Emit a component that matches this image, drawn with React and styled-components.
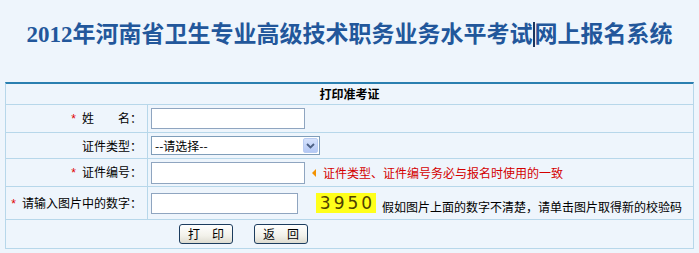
import React from 'react';
import styled, { createGlobalStyle } from 'styled-components';

const GlobalStyle = createGlobalStyle`
  html, body { margin: 0; padding: 0; background: #EEF5FC; }
  body {
    font-family: "Noto Sans CJK SC", "Liberation Sans", sans-serif;
    font-size: 12px;
    color: #000;
  }
`;

const Page = styled.div`
  width: 699px;
  height: 253px;
  overflow: hidden;
`;

const Title = styled.h1`
  margin: 0;
  height: 82px;
  box-sizing: border-box;
  padding-top: 21px;
  text-align: center;
  font-family: "Liberation Serif", "Noto Sans CJK SC", serif;
  font-size: 23px;
  font-weight: bold;
  line-height: 28px;
  color: #22579B;
  white-space: nowrap;
`;

const Caret = styled.span`
  display: inline-block;
  width: 2px;
  height: 25px;
  background: #1a3560;
  vertical-align: -5px;
`;

const FormTable = styled.table`
  margin-left: 5px;
  width: 689px;
  border-collapse: separate;
  border-spacing: 0;
  border-top: 2px solid #2A7FB0;
  border-left: 1px solid #B7D7EA;
  border-right: 1px solid #B7D7EA;
`;

const HeadCell = styled.th`
  height: 20px;
  padding: 0;
  border-bottom: 1px solid #B7D7EA;
  font-size: 12px;
  font-weight: bold;
  text-align: center;
  line-height: 20px;
`;

const LabelCell = styled.td`
  width: 136px;
  height: ${p => p.$h}px;
  padding: 0 5px 0 0;
  border-bottom: 1px solid #B7D7EA;
  border-right: 1px solid #B7D7EA;
  text-align: right;
  white-space: nowrap;
  line-height: 16px;
`;

const FieldCell = styled.td`
  height: ${p => p.$h}px;
  padding: 0 0 0 3px;
  border-bottom: 1px solid #B7D7EA;
`;

const ButtonCell = styled.td`
  height: 28px;
  padding: 0 0 0 173px;
  border-bottom: 1px solid #B7D7EA;
`;

const FieldLine = styled.div`
  display: flex;
  align-items: center;
`;

const Star = styled.span`
  color: #e00000;
  font-family: "Liberation Sans", sans-serif;
  margin-right: 6px;
`;

const TextInput = styled.input`
  box-sizing: border-box;
  width: ${p => p.$w}px;
  height: ${p => p.$ht}px;
  margin: 0;
  padding: 1px 3px;
  border: 1px solid #8FA5C0;
  background: #fff;
  font-size: 12px;
  outline: none;
`;

const SelectBox = styled.div`
  box-sizing: border-box;
  width: 169px;
  height: 19px;
  display: flex;
  align-items: center;
  border: 1px solid #7F9DB9;
  background: #fff;
  padding: 1px;
`;

const SelectText = styled.span`
  flex: 1;
  padding-left: 2px;
  font-size: 12px;
  line-height: 15px;
`;

const SelectButton = styled.span`
  width: 15px;
  height: 15px;
  box-sizing: border-box;
  display: flex;
  align-items: center;
  justify-content: center;
  background: linear-gradient(#D6E2FC, #B4C8F5);
  border: 1px solid #B9CCF2;
  border-radius: 2px;
`;

const Arrow = styled.span`
  width: 0;
  height: 0;
  border-top: 4px solid transparent;
  border-bottom: 4px solid transparent;
  border-right: 4px solid #F39200;
  margin: 0 7px 0 7px;
`;

const Note = styled.span`
  color: #D40000;
  font-size: 12px;
`;

const Captcha = styled.span`
  width: 60px;
  height: 20px;
  margin-left: 18px;
  display: inline-flex;
  align-items: center;
  justify-content: center;
  background: #FFFF1A;
  color: #4F4200;
  font-family: "DejaVu Sans", sans-serif;
  font-size: 17px;
  font-weight: normal;
  letter-spacing: 3px;
  padding-left: 3px;
  box-sizing: border-box;
`;

const Hint = styled.span`
  margin-left: 6px;
  margin-top: 6px;
  font-size: 12px;
`;

const ButtonRow = styled.div`
  display: flex;
  gap: 21px;
`;

const Button = styled.button`
  box-sizing: border-box;
  width: 54px;
  height: 20px;
  padding: 0;
  border: 1px solid #1C3C5E;
  border-radius: 3px;
  background: linear-gradient(#FFFFFF, #F2F1EA 60%, #DDDBD0);
  font-family: "Noto Sans CJK SC", sans-serif;
  font-size: 12px;
  line-height: 18px;
  color: #000;
`;

export default function App() {
  return (
    <Page>
      <GlobalStyle />
      <Title>
        2012年河南省卫生专业高级技术职务业务水平考试<Caret />网上报名系统
      </Title>
      <FormTable>
        <tbody>
          <tr>
            <HeadCell colSpan={2}>打印准考证</HeadCell>
          </tr>
          <tr>
            <LabelCell $h={27}><Star>*</Star>姓　　名：</LabelCell>
            <FieldCell $h={27}>
              <FieldLine><TextInput $w={154} $ht={21} /></FieldLine>
            </FieldCell>
          </tr>
          <tr>
            <LabelCell $h={25}>证件类型：</LabelCell>
            <FieldCell $h={25}>
              <FieldLine>
                <SelectBox>
                  <SelectText>--请选择--</SelectText>
                  <SelectButton>
                    <svg width="9" height="6" viewBox="0 0 9 6">
                      <path d="M1 1 L4.5 4.5 L8 1" fill="none" stroke="#4D6185" strokeWidth="1.8" />
                    </svg>
                  </SelectButton>
                </SelectBox>
              </FieldLine>
            </FieldCell>
          </tr>
          <tr>
            <LabelCell $h={27}><Star>*</Star>证件编号：</LabelCell>
            <FieldCell $h={27}>
              <FieldLine>
                <TextInput $w={154} $ht={22} />
                <Arrow />
                <Note>证件类型、证件编号务必与报名时使用的一致</Note>
              </FieldLine>
            </FieldCell>
          </tr>
          <tr>
            <LabelCell $h={32}><Star>*</Star>请输入图片中的数字：</LabelCell>
            <FieldCell $h={32}>
              <FieldLine>
                <TextInput $w={147} $ht={21} />
                <Captcha>3950</Captcha>
                <Hint>假如图片上面的数字不清楚，请单击图片取得新的校验码</Hint>
              </FieldLine>
            </FieldCell>
          </tr>
          <tr>
            <ButtonCell colSpan={2}>
              <ButtonRow>
                <Button type="button">打　印</Button>
                <Button type="button">返　回</Button>
              </ButtonRow>
            </ButtonCell>
          </tr>
        </tbody>
      </FormTable>
    </Page>
  );
}
